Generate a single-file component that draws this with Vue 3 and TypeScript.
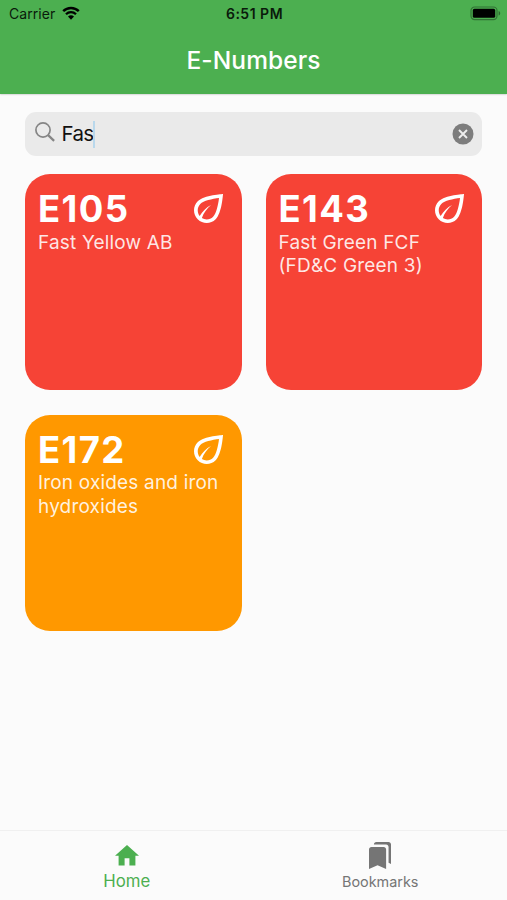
<script setup lang="ts">
import { ref } from 'vue'

interface Additive {
  code: string
  lines: string[]
  level: 'danger' | 'caution'
}

const query = ref('Fas')

const additives: Additive[] = [
  { code: 'E105', lines: ['Fast Yellow AB'], level: 'danger' },
  { code: 'E143', lines: ['Fast Green FCF', '(FD&C Green 3)'], level: 'danger' },
  { code: 'E172', lines: ['Iron oxides and iron', 'hydroxides'], level: 'caution' },
]
</script>

<template>
  <div class="screen">
    <header class="app-bar">
      <div class="status">
        <div class="carrier">
          <span class="carrier-name">Carrier</span>
          <svg class="wifi" viewBox="0 0 18 14">
            <path d="M1.2 5.1a11.2 11.2 0 0 1 15.6 0" fill="none" stroke="#000" stroke-width="2.5" />
            <path d="M4 8.2a7.1 7.1 0 0 1 10 0" fill="none" stroke="#000" stroke-width="2.3" />
            <path d="M6 10.6a4.3 4.3 0 0 1 6 0L9 13.7z" />
          </svg>
        </div>
        <span class="time">6:51 PM</span>
        <svg class="battery" viewBox="0 0 31 15">
          <rect x="1" y="1" width="26" height="12.6" rx="3.6" fill="none" stroke="#000" stroke-opacity=".35" stroke-width="1.2" />
          <rect x="2.8" y="2.8" width="22.4" height="9" rx="1.6" />
          <path d="M28.6 5v4.6c1-.4 1.6-1.2 1.6-2.3S29.6 5.4 28.6 5z" fill-opacity=".4" />
        </svg>
      </div>
      <h1 class="title">E-Numbers</h1>
    </header>

    <main class="content">
      <div class="search">
        <svg class="magnifier" viewBox="0 0 20 20" fill="none" stroke="#858585">
          <circle cx="8" cy="8" r="7.1" stroke-width="1.7" />
          <path d="M13.1 13.1l6 5.8" stroke-width="2.2" />
        </svg>
        <span class="query">{{ query }}</span>
        <span class="caret"></span>
        <svg class="clear" viewBox="0 0 22 22">
          <circle cx="11" cy="11" r="10.5" fill="#7d7d7d" />
          <path d="M7 7l8 8M15 7l-8 8" stroke="#ededed" stroke-width="1.9" />
        </svg>
      </div>

      <section class="grid">
        <article v-for="item in additives" :key="item.code" class="card" :class="item.level">
          <div class="card-head">
            <h2 class="code">{{ item.code }}</h2>
            <svg class="leaf" viewBox="4 4 16 16">
              <path d="M6.05 8.05c-2.73 2.73-2.73 7.17 0 9.9C7.42 19.32 9.21 20 11 20s3.58-.68 4.95-2.05C19.43 14.47 20 4 20 4S9.53 4.57 6.05 8.05zM14.54 16.54C13.59 17.48 12.34 18 11 18c-.89 0-1.9-.35-2.65-.78.92-2.88 2.79-5.31 5.05-7.22-2.63 1.36-4.75 3.56-6.28 6.1-1.48-1.96-1.44-4.85.35-6.64C9.21 7.72 14.04 6.65 17.8 6.2c-.45 3.76-1.52 8.59-3.26 10.34z" />
            </svg>
          </div>
          <p class="name">
            <span v-for="line in item.lines" :key="line" class="line">{{ line }}</span>
          </p>
        </article>
      </section>
    </main>

    <nav class="tabs">
      <a class="tab active">
        <svg class="home" viewBox="2 3 20 17"><path d="M10 20v-6h4v6h5v-8h3L12 3 2 12h3v8z" /></svg>
        <span class="tab-label">Home</span>
      </a>
      <a class="tab">
        <svg class="bookmarks" viewBox="3 1 18 22"><path d="M19 18l2 1V3c0-1.1-.9-2-2-2H8.99C7.89 1 7 1.9 7 3h10c1.1 0 2 .9 2 2v13zM15 5H5c-1.1 0-2 .9-2 2v16l7-3 7 3V7c0-1.1-.9-2-2-2z" /></svg>
        <span class="tab-label">Bookmarks</span>
      </a>
    </nav>
  </div>
</template>

<style>
body {
  margin: 0;
  background: #fafafa;
}
</style>

<style scoped>
.screen {
  display: flex;
  flex-direction: column;
  height: 900px;
  overflow: hidden;
  background: #fbfbfb;
  font-family: Inter, Roboto, sans-serif;
}
.screen svg {
  display: block;
  flex: none;
}
.app-bar {
  height: 94px;
  flex: none;
  background: #4caf50;
  box-shadow: 0 0 2px rgba(0, 0, 0, 0.35);
}
.status {
  display: grid;
  grid-template-columns: 1fr auto 1fr;
  align-items: center;
  height: 27px;
  padding: 0 6px 0 9px;
  color: #0a1a0b;
}
.carrier {
  display: flex;
  align-items: center;
  gap: 6.5px;
}
.carrier-name {
  font-size: 14px;
  letter-spacing: 0.05px;
}
.wifi {
  width: 18px;
  height: 14px;
  margin-top: -2px;
}
.time {
  font-size: 14px;
  font-weight: 600;
  letter-spacing: 0.5px;
  margin-right: 1px;
}
.battery {
  width: 31px;
  height: 15px;
  justify-self: end;
}
.title {
  margin: 18px 0 0;
  font-size: 24.5px;
  line-height: 30px;
  font-weight: 500;
  letter-spacing: 0.1px;
  text-align: center;
  color: #fff;
}
.content {
  flex: 1;
  padding: 18px 25px 0;
}
.search {
  display: flex;
  align-items: center;
  height: 44px;
  padding: 0 8px 0 10px;
  border-radius: 11px;
  background: #eaeaea;
}
.magnifier {
  width: 20px;
  height: 20px;
  margin-top: -4px;
}
.query {
  margin-left: 6.5px;
  font-size: 20.5px;
  line-height: 24px;
  letter-spacing: -0.7px;
  color: #111;
}
.caret {
  width: 2px;
  height: 27px;
  background: #b9d8ec;
}
.clear {
  width: 22px;
  height: 22px;
  margin-left: auto;
  margin-top: -1px;
}
.grid {
  display: grid;
  grid-template-columns: 1fr 1fr;
  grid-auto-rows: 216px;
  gap: 24.6px 24px;
  margin-top: 18.4px;
}
.card {
  box-sizing: border-box;
  padding: 15px 13px;
  border-radius: 25px;
  color: #fff;
}
.danger {
  background: #f64336;
}
.caution {
  background: #ff9800;
}
.card-head {
  display: flex;
  justify-content: space-between;
  padding-right: 5.5px;
}
.code {
  margin: 0;
  font-size: 36.5px;
  line-height: 40px;
  font-weight: 700;
  letter-spacing: 1.4px;
}
.leaf {
  width: 29px;
  height: 29px;
  margin-top: 4.7px;
  fill: #fff;
}
.name {
  margin: 1.5px 0 0;
  font-size: 19px;
  line-height: 23.3px;
  letter-spacing: 0.18px;
  color: rgba(255, 255, 255, 0.88);
}
.line {
  display: block;
  white-space: nowrap;
}
.tabs {
  display: flex;
  flex: none;
  height: 69px;
  border-top: 1px solid #f0f0f0;
}
.tab {
  display: flex;
  flex: 1;
  flex-direction: column;
  align-items: center;
  color: #757575;
  fill: currentColor;
  font-size: 14.4px;
}
.active {
  color: #4caf50;
  font-size: 16.8px;
}
.home {
  width: 24px;
  height: 20.5px;
  margin-top: 14px;
}
.bookmarks {
  width: 22px;
  height: 27px;
  margin-top: 11px;
}
.tab-label {
  line-height: 20px;
  margin-top: 3px;
}
.active .tab-label {
  margin-top: 5px;
}
</style>
